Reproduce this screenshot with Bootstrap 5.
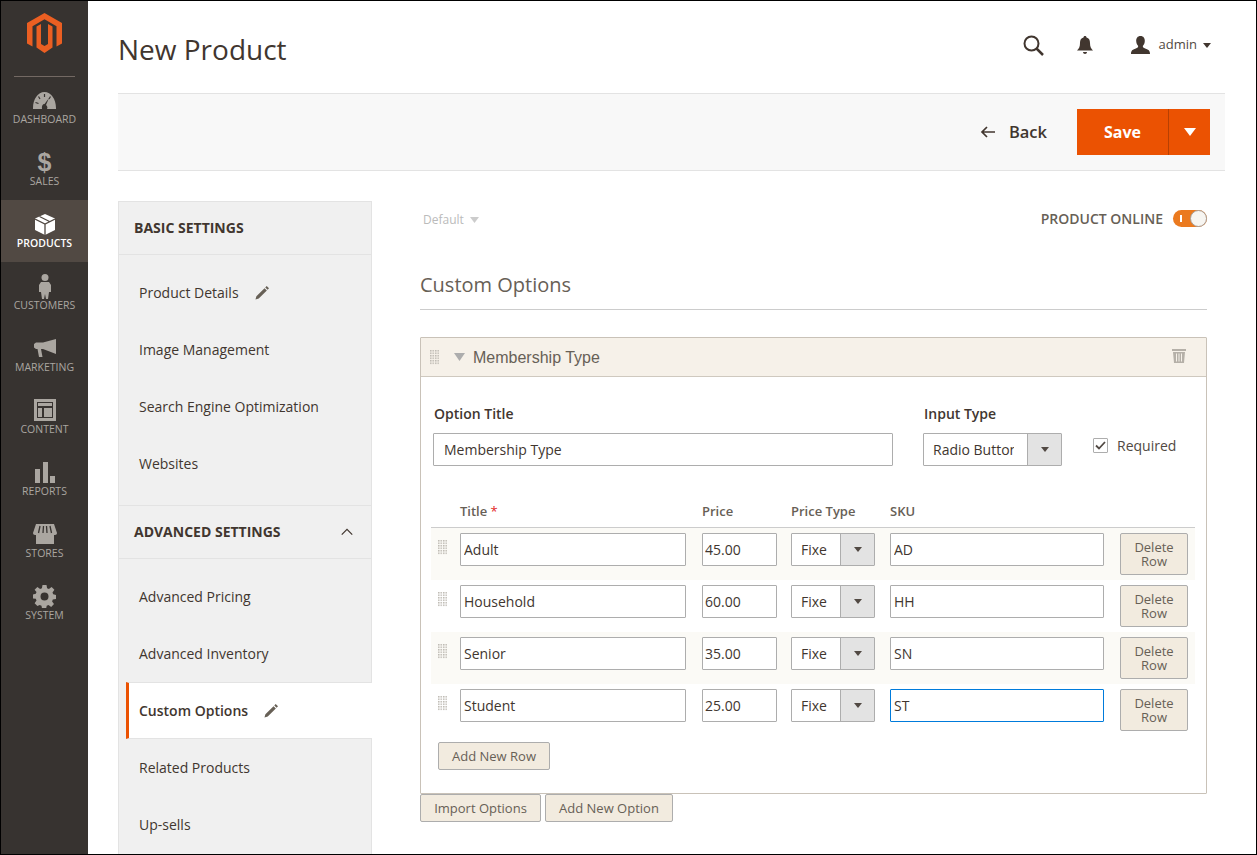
<!DOCTYPE html>
<html lang="en">
<head>
    <meta charset="UTF-8">
    <meta name="viewport" content="width=device-width, initial-scale=1.0">
    <title>New Product</title>
    <link href="https://cdn.jsdelivr.net/npm/bootstrap@5.3.3/dist/css/bootstrap.min.css" rel="stylesheet">
    <script src="https://cdn.jsdelivr.net/npm/bootstrap@5.3.3/dist/js/bootstrap.bundle.min.js"></script>
    <style>
        html, body { height: 855px; overflow: hidden; }
        body { font-family: "Open Sans", "Liberation Sans", sans-serif; font-size: 14px; color: #41362f; border: 1px solid #000; background: #fff; }
        .shell { height: 853px; overflow: hidden; }

        .side-menu { width: 87px; background: #373330; flex: none; }
        .logo-box { height: 75px; padding-top: 12px; text-align: center; }
        .logo-rule { border-top: 1px solid #736963; margin: 0 13px -1px 13px; }
        .menu-item { height: 62px; padding-top: 12px; color: #aaa6a0; font-size: 10.5px; text-transform: uppercase; text-decoration: none; }
        .menu-item.on { background: #514943; color: #fff; font-weight: 600; }
        .menu-icon { height: 24px; }
        .menu-label { line-height: 14px; }
        .sales-sign { font-size: 25px; font-family: "Liberation Sans", sans-serif; }

        .page-area { width: 1168px; flex: none; padding-left: 30px; }
        .top-head { height: 92px; padding-right: 45px; }
        .top-head h1 { font-size: 28px; font-weight: 400; margin: 0; padding-top: 6px; color: #41362f; }
        .head-tools { margin-top: -4px; }
        .admin-name { font-size: 13px; color: #514943; }
        .act-bar { width: 1107px; height: 78px; background: #f8f8f8; border-top: 1px solid #e3e3e3; border-bottom: 1px solid #e3e3e3; padding-right: 15px; }
        .back-btn { font-size: 16.5px; font-weight: 600; color: #41362f; padding: 0; border: 0; margin-right: 30px; }
        .save-group { height: 46px; background: #eb5202; color: #fff; }
        .save-main { width: 92px; font-size: 16px; font-weight: 700; border: 0; border-right: 1px solid #b84002; color: #fff; padding: 0; }
        .save-main:hover { color: #fff; }
        .save-drop { width: 41px; padding: 0; border: 0; margin-left: 0 !important; }

        .two-cols { padding-top: 30px; }
        .left-panel { width: 254px; flex: none; background: #f0f0f0; border-left: 1px solid #e3e3e3; border-right: 1px solid #e3e3e3; border-top: 1px solid #e3e3e3; height: 660px; margin-right: 48px; }
        .sec-head { height: 53px; font-weight: 700; color: #41362f; padding: 0 18px 2px 15px; text-transform: uppercase; border-bottom: 1px solid #e3e3e3; }
        .sec-head.next { border-top: 1px solid #e3e3e3; height: 54px; margin-top: 13px; }
        .nav-list { padding-top: 9px; }
        .nav-row { height: 57px; padding-left: 20px; color: #41362f; text-decoration: none; }
        .nav-row.cur { background: #fff; font-weight: 600; margin-left: 7px; margin-right: -1px; padding-left: 10px; border-left: 3px solid #eb5202; border-top: 1px solid #e3e3e3; border-bottom: 1px solid #e3e3e3; }
        .pen-icon { margin-left: 16px; }

        .right-col { width: 787px; flex: none; }
        .store-row { height: 36px; padding-left: 3px; }
        .store-name { font-size: 12px; color: #bbb; margin-top: 1px; }
        .store-caret { margin-left: 6px; }
        .online-box { margin-top: -1px; }
        .online-label { font-weight: 600; color: #676056; margin-right: 10px; }
        .toggle-track { width: 34px; height: 17px; border-radius: 9px; background: #eb7a1f; padding: 0; }
        .toggle-knob { width: 17px; height: 17px; border-radius: 50%; background: #f7f5f1; border: 1px solid #a79d95; }
        .toggle-bar { width: 2px; height: 7px; background: #fff; margin: 0 6px 0 7px; }
        .sec-title { font-size: 20px; font-weight: 400; color: #676056; margin: 2px 0 0; height: 71px; padding-top: 31px; border-bottom: 1px solid #ccc; line-height: 30px; }

        .opt-card { margin-top: 27px; height: 457px; border: 1px solid #c9c2b8; border-radius: 1px; }
        .opt-head { height: 39px; background: #f6f1e9; border-bottom: 1px solid #cfc9bf; padding: 0 20px 0 9px; font-family: "Liberation Sans", Arial, sans-serif; font-size: 16px; color: #676056; }
        .opt-name { padding-top: 2px; }
        .trash-icon { margin-top: -4px; }
        .opt-body { padding: 27px 0 0 0; }
        .opt-top { padding-left: 12px; }
        .lbl { font-weight: 600; color: #41362f; line-height: 20px; margin-bottom: 9px; padding-left: 1px; display: block; }
        .field { height: 33px; border: 1px solid #adadad; border-radius: 1px; font-size: 14px; color: #41362f; padding: 0 10px; font-family: inherit; box-shadow: none; }
        .title-col { width: 460px; margin-right: 30px; flex: none; }
        .type-col { width: 139px; margin-right: 31px; flex: none; }
        .pick { height: 33px; border: 1px solid #adadad; border-radius: 1px; }
        .pick select { flex: none; height: 31px; border: 0; border-radius: 0; background: #fff none; font-size: 14px; color: #41362f; box-shadow: none; }
        .pick-wide select { width: 103px; padding: 0 13px 0 9px; }
        .pick-small select { width: 48px; padding: 0 13px 0 9px; }
        .pick-arrow { flex: 1; background: #e3e3e3; border-left: 1px solid #adadad; }
        .req-box { margin-bottom: 13px; }
        .req-check { width: 15px; height: 15px; border: 1px solid #adadad; border-radius: 1px; background: #fff; margin-right: 9px; }
        .req-text { color: #514943; line-height: 14px; }

        .row-wrap { margin: 35px 11px 0 10px; }
        .grid-row { display: grid; grid-template-columns: 14px 227px 74px 84px 215px 68px; column-gap: 15px; }
        .grid-head { height: 27px; border-bottom: 1px solid #ccc; font-size: 13px; font-weight: 600; color: #676056; line-height: 20px; }
        .grid-body { height: 52px; padding-top: 5px; }
        .grid-body:nth-child(even) { background: #fbfaf6; }
        .grid-body .field { padding: 0 3px; }
        .name-field { width: 226px; }
        .price-field { width: 75px; padding-left: 2px !important; }
        .sku-field { width: 214px; }
        .sku-field.hot { border-color: #007bdb; color: #41362f; }
        .drag-cell { padding: 7px 0 0 7px; line-height: 0; }
        .req-star { color: #e22626; font-weight: 400; }
        .tan-btn { background: #f2ebdf; border: 1px solid #adadad; border-radius: 2px; color: #676056; font-size: 13px; line-height: 16px; padding: 0; height: 28px; }
        .del-btn { width: 68px; height: 42px; line-height: 14px; }
        .add-row-btn { width: 112px; margin: 6px 0 0 17px; display: block; }
        .import-btn { width: 121px; margin-right: 4px; }
        .new-opt-btn { width: 128px; }
    </style>
</head>

<body>
    <div class="shell d-flex">
        <!-- admin menu -->
        <nav class="side-menu d-flex flex-column">
            <div class="logo-box">
                <svg width="35" height="40" viewBox="0 0 35 40"><path fill="#eb5f22" d="M17.500 0 35 10v20.500l-5.500 3V13.200L17.500 6.300 5.500 13.200v20.300l-5.500-3V10z"/><path fill="#eb5f22" d="M14 11v20l3.500 2 3.500-2V11l4.500 2.500v21L17.500 40l-8-5.500v-21z"/></svg>
            </div>
            <div class="logo-rule"></div>
            <a class="menu-item d-flex flex-column align-items-center" href="#">
                <div class="menu-icon d-flex align-items-center"><svg width="23" height="17" viewBox="0 0 23 17"><path fill="#aaa6a0" d="M0 16C0 7 5 0 11.500 0S23 7 23 16v1H14c1-2 0-3-1-4l3-7-4.500 6C9.500 12 8.500 14 9 17H0z"/><path stroke="#373330" stroke-width="1.200" d="M11.500 2v3M5.500 4.500 7 7M17.500 4.500 16 7M2.500 10.500l3 1"/></svg></div>
                <span class="menu-label">Dashboard</span>
            </a>
            <a class="menu-item d-flex flex-column align-items-center" href="#">
                <div class="menu-icon d-flex align-items-center"><span class="fw-bold lh-1 sales-sign">$</span></div>
                <span class="menu-label">Sales</span>
            </a>
            <a class="menu-item on d-flex flex-column align-items-center" href="#">
                <div class="menu-icon d-flex align-items-center"><svg width="20" height="21" viewBox="0 0 20 21"><path fill="#fff" d="M10 0 20 4.500V16L10 21 0 16V4.500z"/><path fill="none" stroke="#514943" stroke-width="1.300" d="M0 5l10 5 10-5M10 10v11M4.500 2.500l10 5"/></svg></div>
                <span class="menu-label">Products</span>
            </a>
            <a class="menu-item d-flex flex-column align-items-center" href="#">
                <div class="menu-icon d-flex align-items-center"><svg width="12" height="25" viewBox="0 0 12 25"><circle cx="6" cy="3.500" r="3.500" fill="#aaa6a0"/><path fill="#aaa6a0" d="M2 8h8l2 3v7h-2l-1 7H7l-1-5-1 5H3l-1-7H0v-7z"/></svg></div>
                <span class="menu-label">Customers</span>
            </a>
            <a class="menu-item d-flex flex-column align-items-center" href="#">
                <div class="menu-icon d-flex align-items-center"><svg width="22" height="18" viewBox="0 0 22 18"><path fill="#aaa6a0" d="M22 0v15L9 10H7l1.500 8H5L3.500 10H2L0 8.500V5l2-1.500h7z"/></svg></div>
                <span class="menu-label">Marketing</span>
            </a>
            <a class="menu-item d-flex flex-column align-items-center" href="#">
                <div class="menu-icon d-flex align-items-center"><svg width="22" height="22" viewBox="0 0 22 22"><path fill="#aaa6a0" fill-rule="evenodd" d="M0 0h22v22H0zM3 3v16h16V3zM4 4h14v3H4zM4 9h4v9H4zM10 9h8v9h-8z"/></svg></div>
                <span class="menu-label">Content</span>
            </a>
            <a class="menu-item d-flex flex-column align-items-center" href="#">
                <div class="menu-icon d-flex align-items-center"><svg width="20" height="21" viewBox="0 0 20 21"><path fill="#aaa6a0" d="M0 7h5v14H0zM8 0h5v21H8zM15 14h5v7h-5z"/></svg></div>
                <span class="menu-label">Reports</span>
            </a>
            <a class="menu-item d-flex flex-column align-items-center" href="#">
                <div class="menu-icon d-flex align-items-center"><svg width="24" height="20" viewBox="0 0 24 20"><path fill="#aaa6a0" d="M3 0h18l3 9c0 2-2 2-3 2v9H3v-9C2 11 0 11 0 9z"/><path stroke="#373330" stroke-width="1.300" d="M7 2 5.500 9M10.500 2 10 9M13.500 2 14 9M17 2l1.500 7"/></svg></div>
                <span class="menu-label">Stores</span>
            </a>
            <a class="menu-item d-flex flex-column align-items-center" href="#">
                <div class="menu-icon d-flex align-items-center"><svg width="23" height="23" viewBox="0 0 23 23"><path fill="#aaa6a0" fill-rule="evenodd" d="M9.500 0h4l.6 3.200 1.800.7L18.600 2l2.800 2.800-1.900 2.700.7 1.800 2.800.7v4l-3.200.6-.7 1.800 1.900 2.700-2.800 2.800-2.700-1.900-1.800.7-.6 3.200h-4l-.6-3.200-1.800-.7L4.400 21l-2.800-2.800 1.900-2.700-.7-1.800L0 13.500v-4l2.800-.7.700-1.800L1.600 4.800 4.400 2l2.700 1.900 1.800-.7zM11.500 7.500a4 4 0 1 0 0 8 4 4 0 0 0 0-8z"/></svg></div>
                <span class="menu-label">System</span>
            </a>
        </nav>

        <main class="page-area">
            <div class="top-head d-flex justify-content-between align-items-center">
                <h1>New Product</h1>
                <div class="head-tools d-flex align-items-center">
                    <svg width="21" height="21" viewBox="0 0 21 21"><circle cx="8.500" cy="8.500" r="7" fill="none" stroke="#41362f" stroke-width="2"/><path stroke="#41362f" stroke-width="2.500" d="m13.500 13.500 6.500 6.500"/></svg>
                    <svg style="margin-left:33px" width="16" height="18" viewBox="0 0 16 18"><path fill="#41362f" d="M8 0c1 0 1.500.6 1.500 1.500C12 2 13 4 13 7c0 4 1 5.500 3 7.500H0C2 12.500 3 11 3 7c0-3 1-5 3.500-5.500C6.500.6 7 0 8 0zM6 16h4c0 1.200-1 2-2 2s-2-.8-2-2z"/></svg>
                    <svg style="margin-left:38px" width="19" height="18" viewBox="0 0 19 18"><path fill="#41362f" d="M9.500 0c3 0 4.300 2.200 4.300 5 0 2.300-1 4-2 5 0 1.500 1 2 3.500 3 2.300.9 3.700 1.700 3.700 5H0c0-3.300 1.400-4.100 3.700-5 2.500-1 3.500-1.500 3.500-3-1-1-2-2.700-2-5 0-2.800 1.300-5 4.300-5z"/></svg>
                    <span class="admin-name" style="margin-left:9px">admin</span>
                    <svg style="margin-left:6px" width="8" height="5" viewBox="0 0 8 5"><path fill="#41362f" d="M0 0h8L4 5z"/></svg>
                </div>
            </div>

            <div class="act-bar d-flex justify-content-end align-items-center">
                <button class="btn back-btn d-flex align-items-center" type="button">
                    <svg width="15" height="12" viewBox="0 0 15 12" style="margin-right:14px"><path fill="none" stroke="#41362f" stroke-width="1.700" d="M15 6H2M7 1 2 6l5 5"/></svg>Back
                </button>
                <div class="save-group btn-group rounded-0">
                    <button class="btn save-main rounded-0" type="button">Save</button>
                    <button class="btn save-drop rounded-0 d-flex align-items-center justify-content-center" type="button" aria-label="More">
                        <svg width="12" height="8" viewBox="0 0 12 8"><path fill="#fff" d="M0 0h12L6 8z"/></svg>
                    </button>
                </div>
            </div>

            <div class="two-cols d-flex">
                <div class="left-panel">
                    <div class="sec-head d-flex align-items-center">Basic Settings</div>
                    <div class="nav-list">
                        <a class="nav-row d-flex align-items-center" href="#">Product Details
                            <svg class="pen-icon" width="14" height="14" viewBox="0 0 15 15"><path fill="#676056" d="M12.500 0 15 2.500l-1.500 1.500L11 1.500zM10.200 2.300l2.500 2.500-8.700 8.700L.5 14.500l1-3.500z"/></svg>
                        </a>
                        <a class="nav-row d-flex align-items-center" href="#">Image Management</a>
                        <a class="nav-row d-flex align-items-center" href="#">Search Engine Optimization</a>
                        <a class="nav-row d-flex align-items-center" href="#">Websites</a>
                    </div>
                    <div class="sec-head next d-flex align-items-center justify-content-between">Advanced Settings
                        <svg width="12" height="7" viewBox="0 0 13 8"><path fill="none" stroke="#41362f" stroke-width="1.400" d="M.5 7.500l6-6 6 6"/></svg>
                    </div>
                    <div class="nav-list">
                        <a class="nav-row d-flex align-items-center" href="#">Advanced Pricing</a>
                        <a class="nav-row d-flex align-items-center" href="#">Advanced Inventory</a>
                        <a class="nav-row cur d-flex align-items-center" href="#">Custom Options
                            <svg class="pen-icon" width="14" height="14" viewBox="0 0 15 15"><path fill="#676056" d="M12.500 0 15 2.500l-1.500 1.500L11 1.500zM10.200 2.300l2.500 2.500-8.700 8.700L.5 14.500l1-3.500z"/></svg>
                        </a>
                        <a class="nav-row d-flex align-items-center" href="#">Related Products</a>
                        <a class="nav-row d-flex align-items-center" href="#">Up-sells</a>
                    </div>
                </div>

                <div class="right-col">
                    <div class="store-row d-flex justify-content-between align-items-center">
                        <div class="store-name d-flex align-items-center">Default
                            <svg class="store-caret" width="9" height="6" viewBox="0 0 9 6"><path fill="#ccc" d="M0 0h9L4.500 6z"/></svg>
                        </div>
                        <div class="online-box d-flex align-items-center">
                            <span class="online-label">PRODUCT ONLINE</span>
                            <div class="toggle-track d-flex align-items-center">
                                <span class="toggle-bar"></span>
                                <span class="toggle-knob ms-auto"></span>
                            </div>
                        </div>
                    </div>
                    <h2 class="sec-title">Custom Options</h2>

                    <div class="opt-card">
                        <div class="opt-head d-flex align-items-center">
                            <svg width="9" height="15" viewBox="0 0 9 15" style="margin-right:15px"><use href="#dots"/></svg>
                            <svg width="11" height="8" viewBox="0 0 11 8" style="margin-right:8px"><path fill="#adadad" d="M0 0h11L5.500 8z"/></svg>
                            <span class="opt-name">Membership Type</span>
                            <svg class="trash-icon ms-auto" width="14" height="15" viewBox="0 0 14 15"><path fill="#b5b0a8" fill-rule="evenodd" d="M0 1h14v2H0zM1 4h12l-1 11H2zM4 5.500v8h1v-8zM6.500 5.500v8h1v-8zM9 5.500v8h1v-8z"/></svg>
                        </div>
                        <div class="opt-body">
                            <div class="opt-top d-flex">
                                <div class="title-col">
                                    <label class="lbl">Option Title</label>
                                    <input class="form-control field" type="text" value="Membership Type">
                                </div>
                                <div class="type-col">
                                    <label class="lbl">Input Type</label>
                                    <div class="pick pick-wide d-flex">
                                        <select class="form-select"><option>Radio Buttons</option></select>
                                        <span class="pick-arrow d-flex align-items-center justify-content-center"><svg width="8" height="5" viewBox="0 0 8 5"><path fill="#514943" d="M0 0h8L4 5z"/></svg></span>
                                    </div>
                                </div>
                                <div class="req-box d-flex align-items-center align-self-end">
                                    <span class="req-check d-flex align-items-center justify-content-center"><svg width="11" height="9" viewBox="0 0 11 9"><path fill="none" stroke="#514943" stroke-width="1.800" d="M1 4.500 4 7.500 10 1"/></svg></span>
                                    <span class="req-text">Required</span>
                                </div>
                            </div>

                            <div class="row-wrap">
                                <div class="grid-row grid-head">
                                    <span></span><span>Title <span class="req-star">*</span></span><span>Price</span><span>Price Type</span><span>SKU</span><span></span>
                                </div>
                                <div class="grid-row grid-body">
                                    <div class="drag-cell"><svg width="9" height="15" viewBox="0 0 9 15"><use href="#dots"/></svg></div>
                                    <div><input class="form-control field name-field" type="text" value="Adult"></div>
                                    <div><input class="form-control field price-field" type="text" value="45.00"></div>
                                    <div class="pick pick-small d-flex"><select class="form-select"><option>Fixed</option></select><span class="pick-arrow d-flex align-items-center justify-content-center"><svg width="8" height="5" viewBox="0 0 8 5"><path fill="#514943" d="M0 0h8L4 5z"/></svg></span></div>
                                    <div><input class="form-control field sku-field" type="text" value="AD"></div>
                                    <div><button class="btn tan-btn del-btn" type="button">Delete Row</button></div>
                                </div>
                                <div class="grid-row grid-body">
                                    <div class="drag-cell"><svg width="9" height="15" viewBox="0 0 9 15"><use href="#dots"/></svg></div>
                                    <div><input class="form-control field name-field" type="text" value="Household"></div>
                                    <div><input class="form-control field price-field" type="text" value="60.00"></div>
                                    <div class="pick pick-small d-flex"><select class="form-select"><option>Fixed</option></select><span class="pick-arrow d-flex align-items-center justify-content-center"><svg width="8" height="5" viewBox="0 0 8 5"><path fill="#514943" d="M0 0h8L4 5z"/></svg></span></div>
                                    <div><input class="form-control field sku-field" type="text" value="HH"></div>
                                    <div><button class="btn tan-btn del-btn" type="button">Delete Row</button></div>
                                </div>
                                <div class="grid-row grid-body">
                                    <div class="drag-cell"><svg width="9" height="15" viewBox="0 0 9 15"><use href="#dots"/></svg></div>
                                    <div><input class="form-control field name-field" type="text" value="Senior"></div>
                                    <div><input class="form-control field price-field" type="text" value="35.00"></div>
                                    <div class="pick pick-small d-flex"><select class="form-select"><option>Fixed</option></select><span class="pick-arrow d-flex align-items-center justify-content-center"><svg width="8" height="5" viewBox="0 0 8 5"><path fill="#514943" d="M0 0h8L4 5z"/></svg></span></div>
                                    <div><input class="form-control field sku-field" type="text" value="SN"></div>
                                    <div><button class="btn tan-btn del-btn" type="button">Delete Row</button></div>
                                </div>
                                <div class="grid-row grid-body">
                                    <div class="drag-cell"><svg width="9" height="15" viewBox="0 0 9 15"><use href="#dots"/></svg></div>
                                    <div><input class="form-control field name-field" type="text" value="Student"></div>
                                    <div><input class="form-control field price-field" type="text" value="25.00"></div>
                                    <div class="pick pick-small d-flex"><select class="form-select"><option>Fixed</option></select><span class="pick-arrow d-flex align-items-center justify-content-center"><svg width="8" height="5" viewBox="0 0 8 5"><path fill="#514943" d="M0 0h8L4 5z"/></svg></span></div>
                                    <div><input class="form-control field sku-field hot" type="text" value="ST"></div>
                                    <div><button class="btn tan-btn del-btn" type="button">Delete Row</button></div>
                                </div>
                            </div>
                            <button class="btn tan-btn add-row-btn" type="button">Add New Row</button>
                        </div>
                    </div>
                    <div class="d-flex">
                        <button class="btn tan-btn import-btn" type="button">Import Options</button>
                        <button class="btn tan-btn new-opt-btn" type="button">Add New Option</button>
                    </div>
                </div>
            </div>
        </main>
    </div>

    <svg width="0" height="0" class="position-absolute">
        <defs>
            <pattern id="dotgrid" width="2.500" height="2.500" patternUnits="userSpaceOnUse"><rect width="1.500" height="1.500" fill="#bdb9b2"/></pattern>
            <rect id="dots" width="9" height="15" fill="url(#dotgrid)"/>
        </defs>
    </svg>
</body>

</html>
